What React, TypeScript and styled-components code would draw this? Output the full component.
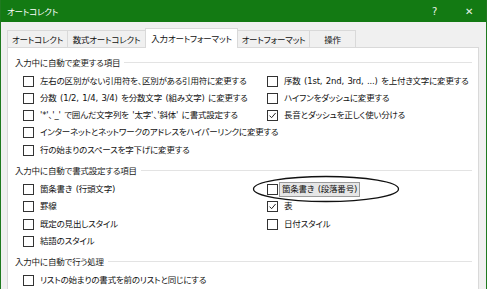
import styled, { createGlobalStyle } from "styled-components";

type Option = {
  label: string;
  checked?: boolean;
  focused?: boolean;
};

type Group = {
  title: string;
  left: Option[];
  right: Option[];
};

const tabs = [
  { label: "オートコレクト", width: 61 },
  { label: "数式オートコレクト", width: 79 },
  { label: "入力オートフォーマット", width: 93, active: true },
  { label: "オートフォーマット", width: 73 },
  { label: "操作", width: 47 },
];

const groups: Group[] = [
  {
    title: "入力中に自動で変更する項目",
    left: [
      { label: "左右の区別がない引用符を、区別がある引用符に変更する" },
      { label: "分数 (1/2, 1/4, 3/4) を分数文字 (組み文字) に変更する" },
      { label: "'*'、'_' で囲んだ文字列を '太字'、'斜体' に書式設定する" },
      { label: "インターネットとネットワークのアドレスをハイパーリンクに変更する" },
      { label: "行の始まりのスペースを字下げに変更する" },
    ],
    right: [
      { label: "序数 (1st, 2nd, 3rd, ...) を上付き文字に変更する" },
      { label: "ハイフンをダッシュに変更する" },
      { label: "長音とダッシュを正しく使い分ける", checked: true },
    ],
  },
  {
    title: "入力中に自動で書式設定する項目",
    left: [
      { label: "箇条書き (行頭文字)" },
      { label: "罫線" },
      { label: "既定の見出しスタイル" },
      { label: "結語のスタイル" },
    ],
    right: [
      { label: "箇条書き (段落番号)", focused: true },
      { label: "表", checked: true },
      { label: "日付スタイル" },
    ],
  },
  {
    title: "入力中に自動で行う処理",
    left: [{ label: "リストの始まりの書式を前のリストと同じにする" }],
    right: [],
  },
];

const CheckItem = ({ label, checked, focused }: Option) => (
  <S.Item>
    <S.Box>
      {checked && (
        <svg width="9" height="9" viewBox="0 0 9 9">
          <path d="M1.5 4.6 L3.6 6.7 L7.6 2" fill="none" stroke="#222" strokeWidth="1" />
        </svg>
      )}
    </S.Box>
    <S.Label $focused={focused}>{label}</S.Label>
  </S.Item>
);

const App = () => {
  return (
    <>
      <GlobalStyle />
      <S.Window>
        <S.TitleBar>
          <S.Title>オートコレクト</S.Title>
          <S.TitleButton $w={35}>?</S.TitleButton>
          <S.TitleButton $w={34}>✕</S.TitleButton>
        </S.TitleBar>
        <S.Body>
          <S.TabStrip>
            {tabs.map((t) => (
              <S.Tab key={t.label} $w={t.width} $active={t.active}>
                {t.label}
              </S.Tab>
            ))}
          </S.TabStrip>
          <S.Panel>
            {groups.map((g) => (
              <S.Group key={g.title}>
                <S.GroupHeader>
                  <span>{g.title}</span>
                  <S.Rule />
                </S.GroupHeader>
                <S.Columns>
                  <S.Column>
                    {g.left.map((o) => (
                      <CheckItem key={o.label} {...o} />
                    ))}
                  </S.Column>
                  <S.Column>
                    {g.right.map((o) => (
                      <CheckItem key={o.label} {...o} />
                    ))}
                  </S.Column>
                </S.Columns>
              </S.Group>
            ))}
          </S.Panel>
        </S.Body>
        <S.Circle width="150" height="30" viewBox="0 0 150 30">
          <ellipse cx="74" cy="14" rx="72.5" ry="12.5" fill="none" stroke="#111" strokeWidth="1.3" />
        </S.Circle>
      </S.Window>
    </>
  );
};

export default App;

const GlobalStyle = createGlobalStyle`
  html, body {
    margin: 0;
    padding: 0;
    background: #ffffff;
  }
  body {
    font-family: "DejaVu Sans", "Noto Sans CJK JP", sans-serif;
    font-feature-settings: "palt";
    font-size: 8.5px;
    letter-spacing: -0.2px;
    word-spacing: 1px;
    color: #111;
  }
`;

const S = {
  Window: styled.div`
    position: relative;
    width: 487px;
    height: 289px;
    box-sizing: border-box;
    background: #f0f0f0;
    border-left: 1px solid #1f7a1f;
    border-right: 1px solid #1f7a1f;
    overflow: hidden;
  `,
  TitleBar: styled.div`
    display: flex;
    align-items: center;
    height: 22px;
    background: #137a13;
    color: #ffffff;
  `,
  Title: styled.div`
    flex: 1;
    padding-left: 6px;
  `,
  TitleButton: styled.div<{ $w: number }>`
    width: ${(p) => p.$w}px;
    text-align: center;
    font-size: 10px;
    color: #e8f3e8;
  `,
  Body: styled.div`
    padding: 5px 6px 0 6px;
  `,
  TabStrip: styled.div`
    display: flex;
    align-items: flex-end;
    height: 20px;
  `,
  Tab: styled.div<{ $w: number; $active?: boolean }>`
    box-sizing: border-box;
    width: ${(p) => p.$w}px;
    height: ${(p) => (p.$active ? 20 : 17)}px;
    display: flex;
    align-items: center;
    justify-content: center;
    padding-bottom: ${(p) => (p.$active ? 2 : 0)}px;
    background: ${(p) => (p.$active ? "#ffffff" : "#f0f0f0")};
    border: 1px solid #d9d9d9;
    border-bottom: none;
    margin-left: -1px;
    position: relative;
    z-index: ${(p) => (p.$active ? 1 : 0)};
    margin-bottom: ${(p) => (p.$active ? -1 : 0)}px;
    &:first-child {
      margin-left: 0;
    }
  `,
  Panel: styled.div`
    box-sizing: border-box;
    width: 472px;
    height: 250px;
    background: #ffffff;
    border: 1px solid #d9d9d9;
    padding: 7px 6px 0 7px;
  `,
  Group: styled.div`
    margin-bottom: 4.5px;
  `,
  GroupHeader: styled.div`
    display: flex;
    align-items: center;
    height: 14px;
    margin-bottom: 3.4px;
    color: #1a1a1a;
  `,
  Rule: styled.div`
    flex: 1;
    height: 0;
    margin-left: 4px;
    border-top: 1px solid #e3e3e3;
  `,
  Columns: styled.div`
    display: grid;
    grid-template-columns: 244px 1fr;
    padding-left: 8px;
  `,
  Column: styled.div`
    display: flex;
    flex-direction: column;
  `,
  Item: styled.div`
    display: flex;
    align-items: center;
    height: 17.3px;
    white-space: nowrap;
  `,
  Box: styled.div`
    box-sizing: border-box;
    width: 11px;
    height: 11px;
    border: 1px solid #333333;
    background: #ffffff;
    display: flex;
    align-items: center;
    justify-content: center;
    flex-shrink: 0;
  `,
  Label: styled.span<{ $focused?: boolean }>`
    margin-left: ${(p) => (p.$focused ? 1 : 3)}px;
    padding: 0 2px;
    line-height: 13px;
    background: ${(p) => (p.$focused ? "#e6e6e6" : "transparent")};
    border: 1px solid ${(p) => (p.$focused ? "#9a9a9a" : "transparent")};
  `,
  Circle: styled.svg`
    position: absolute;
    left: 251px;
    top: 175px;
  `,
};
